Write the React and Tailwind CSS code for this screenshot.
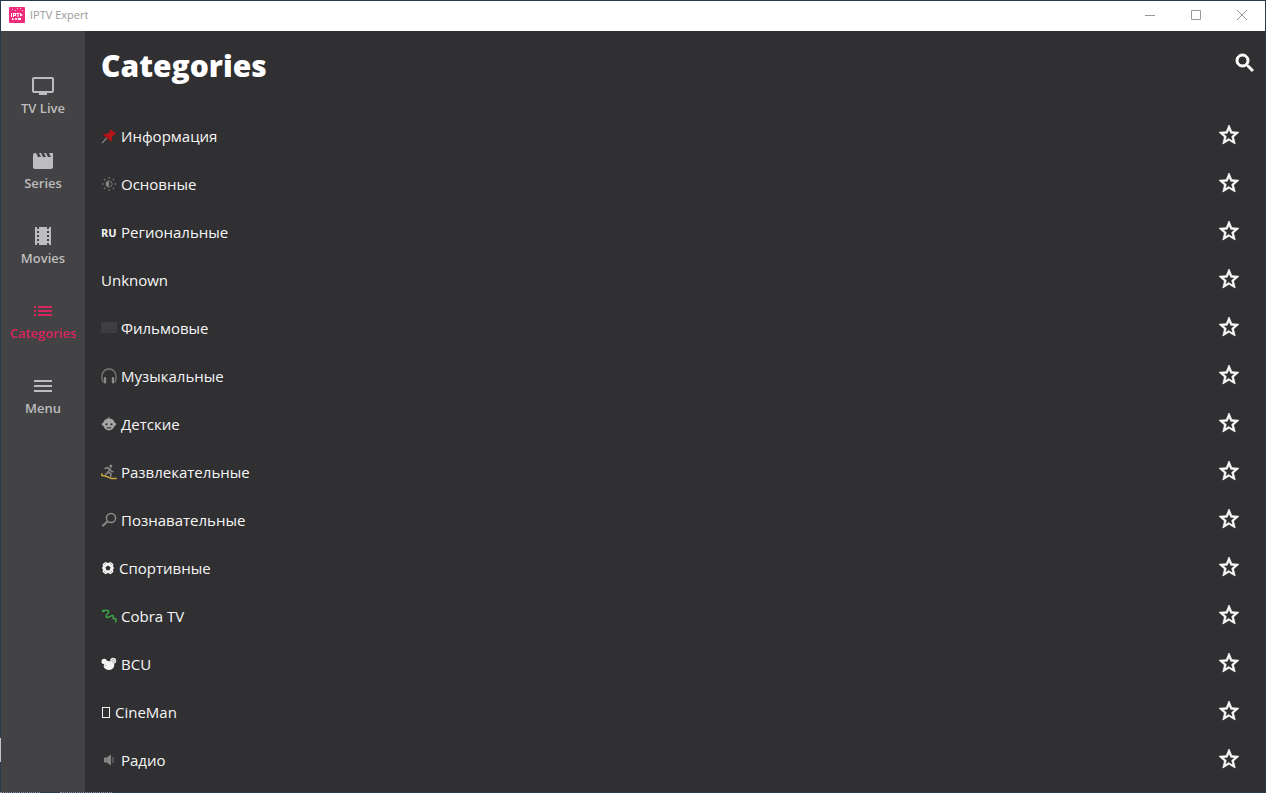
import React from "react";

function Glyph({ d, className = "" }) {
  return (
    <svg viewBox="0 0 24 24" className={`h-6 w-6 fill-current ${className}`} aria-hidden="true">
      <path d={d} />
    </svg>
  );
}

const paths = {
  tv: "M21 3H3c-1.1 0-2 .9-2 2v12c0 1.1.9 2 2 2h5v2h8v-2h5c1.1 0 1.99-.9 1.99-2L23 5c0-1.1-.9-2-2-2zm0 14H3V5h18v12z",
  series:
    "M18 4l2 4h-3l-2-4h-2l2 4h-3l-2-4H8l2 4H7L5 4H4c-1.1 0-1.99.9-1.99 2L2 18c0 1.1.9 2 2 2h16c1.1 0 2-.9 2-2V4h-4z",
  movies:
    "M18 3v2h-2V3H8v2H6V3H4v18h2v-2h2v2h8v-2h2v2h2V3h-2zM8 17H6v-2h2v2zm0-4H6v-2h2v2zm0-4H6V7h2v2zm10 8h-2v-2h2v2zm0-4h-2v-2h2v2zm0-4h-2V7h2v2z",
  list: "M3 13h2v-2H3v2zm0 4h2v-2H3v2zm0-8h2V7H3v2zm4 4h14v-2H7v2zm0 4h14v-2H7v2zM7 7v2h14V7H7z",
  menu: "M3 18h18v-2H3v2zm0-5h18v-2H3v2zm0-7v2h18V6H3z",
  search:
    "M15.5 14h-.79l-.28-.27C15.41 12.59 16 11.11 16 9.5 16 5.91 13.09 3 9.5 3S3 5.91 3 9.5 5.91 16 9.5 16c1.61 0 3.09-.59 4.23-1.57l.27.28v.79l5 4.99L20.49 19l-4.99-5zm-6 0C7.01 14 5 11.99 5 9.5S7.01 5 9.5 5 14 7.01 14 9.5 11.99 14 9.5 14z",
  star: "M12,15.39L8.24,17.66L9.23,13.38L5.91,10.5L10.29,10.13L12,6.09L13.71,10.13L18.09,10.5L14.77,13.38L15.76,17.66M22,9.24L14.81,8.63L12,2L9.19,8.63L2,9.24L7.45,13.97L5.82,21L12,17.27L18.18,21L16.54,13.97L22,9.24Z",
};

function Small({ children, className = "w-4" }) {
  return (
    <svg viewBox="0 0 16 16" className={`h-4 shrink-0 ${className}`} aria-hidden="true">
      {children}
    </svg>
  );
}

const Pin = () => (
  <Small>
    <path d="M5.6 10.2 1 15.2" stroke="#8b8b8b" strokeWidth="1.2" />
    <path d="M9.6 1.2 15.400 6.3l-1.4.6-.9-.3-2.4 3 .3 2.6-1.2 1.200L2 6.8l1-1 3.200.1 2.9-2.600-.4-1.1z" fill="#b8161b" />
    <path d="M9.3 3.4 12.7 6.6M3.4 6.3 10 12.6" stroke="#8c0d12" strokeWidth=".8" />
  </Small>
);

const Dim = () => (
  <Small>
    <circle cx="8" cy="8" r="3.1" fill="none" stroke="#777" strokeWidth="1" />
    <path d="M8 5a3 3 0 0 0 0 6z" fill="#858585" />
    <g stroke="#707070" strokeWidth="1.4">
      <path d="M8 1v1.700M8 13.3v1.700M1 8h1.700M13.3 8h1.700M3 3l1.200 1.200M11.8 11.8l1.200 1.200M3 13l1.200-1.200M11.8 4.2l1.200-1.200" />
    </g>
  </Small>
);

const Screen = () => (
  <Small>
    <rect x="0" y="2" width="16" height="11" rx="1" fill="#3f3e40" />
    <path d="M1 10.5h14" stroke="#393839" />
  </Small>
);

const Headphones = () => (
  <Small>
    <path d="M2.200 14.500C-1.200 7.500 2.500 1 8 1s9.200 6.500 5.800 13.500" fill="none" stroke="#777" strokeWidth="1.300" />
    <rect x="2.800" y="9" width="2.400" height="6.500" rx="1" fill="#8a8a8a" />
    <rect x="10.800" y="9" width="2.400" height="6.500" rx="1" fill="#8a8a8a" />
  </Small>
);

const Baby = () => (
  <Small>
    <path d="M8 3.4C7 2.600 7.300 1.300 8.500 1.200" fill="none" stroke="#a5a5a5" strokeWidth="1" />
    <path d="M8 2.500c3.300 0 5.300 1.800 5.700 4.300 2.100.1 2.100 2.700 0 3-.8 2.700-2.900 4.600-5.700 4.600s-4.900-1.900-5.700-4.600c-2.100-.3-2.100-2.900 0-3C2.700 4.300 4.700 2.500 8 2.500z" fill="#a5a5a5" />
    <circle cx="5.500" cy="8.300" r="1.100" fill="#303030" />
    <circle cx="10.500" cy="8.300" r="1.100" fill="#303030" />
    <path d="M6 11.500q2 1 4 0" fill="none" stroke="#303030" strokeWidth="1.200" />
  </Small>
);

const Snowboarder = () => (
  <Small>
    <path d="M.8 9.800.9 11.500c4 .4 6 1.300 8 2.300s4 .9 6.300.7" fill="none" stroke="#c9a93a" strokeWidth="1.500" strokeLinecap="round" />
    <circle cx="9.800" cy="2" r="1.500" fill="#8b8b8b" />
    <path d="M3.500 4.800 6 3.700l3 1.200-2.700 4L4 11.200M7 8.200l3 1.600-.5 3.200M8.800 4.800l1.400 2.400 2.400.6" fill="none" stroke="#858585" strokeWidth="1.600" />
  </Small>
);

const Lens = () => (
  <Small>
    <circle cx="10" cy="6" r="4.600" fill="none" stroke="#8c8c8c" strokeWidth="1.500" />
    <path d="m6.700 9.300-5.500 5" stroke="#858585" strokeWidth="2.100" />
  </Small>
);

const Ball = () => (
  <Small className="w-[14px]">
    <path d="M5 1 8 2.200 11 1l3.300 2.700-.7 2.300L15 8l-1.400 2 .7 2.300L11 15l-3-1.200L5 15l-3.300-2.700.7-2.300L1 8l1.400-2-.7-2.300z" fill="#f4f4f4" />
    <path d="m8 5 2.900 2.100-1.100 3.400H6.200L5.100 7.100z" fill="#303030" />
    <path d="m5.500 2.500-1.800 2M10.500 2.500l1.800 2M3.500 11.500l1.800 1.800M12.500 11.500l-1.800 1.800" stroke="#777" strokeWidth=".8" />
  </Small>
);

const Snake = () => (
  <Small>
    <path d="M1.500 3.200c1.500-.8 3.500-1.200 5.200-.7 2 .8 1 2.200-.4 3.500C4.500 7.900 5 9.600 7 9.400c2-.3 2.800-2.200 4.800-1.800 1.800.5-.6 2.200.4 3 .8.600 2-.6 2.700.3.500.8-.2 1.800-.1 3" fill="none" stroke="#3da447" strokeWidth="1.500" strokeLinecap="round" />
    <path d="M1 2.500 3 1.800l1.200 1L3 4.200l-1.800-.1z" fill="#3da447" />
  </Small>
);

const Mouse = () => (
  <Small>
    <circle cx="3.200" cy="5.400" r="2.700" fill="#f4f4f4" />
    <circle cx="12.200" cy="4.800" r="3" fill="#f4f4f4" />
    <circle cx="12.400" cy="4.700" r="1.500" fill="none" stroke="#888" strokeWidth=".7" />
    <path d="M3.500 6.500 6.500 4.700l3.400.8 3.200 2.200c.8 3.300-1.600 6.200-4.900 6.200-2.800 0-4.800-1.200-5.600-3.400z" fill="#f4f4f4" />
    <circle cx="4.500" cy="9.500" r=".6" fill="#888" />
  </Small>
);

const Tofu = () => (
  <svg viewBox="0 0 10 16" className="h-4 w-[10px] shrink-0" aria-hidden="true">
    <rect x="1.500" y="3.500" width="7" height="10" fill="none" stroke="#f4f4f4" />
  </svg>
);

const Speaker = () => (
  <Small>
    <path d="M3 5.500h2.800L10 2.500v11l-4.200-3H3z" fill="#858585" />
    <path d="M11.500 5q1.800 3 0 6" fill="none" stroke="#666" strokeWidth="1.200" />
  </Small>
);

const Ru = () => <span className="w-4 pt-0.5 text-[11px] font-bold">RU</span>;

const categories = [
  { icon: Pin, name: "Информация" },
  { icon: Dim, name: "Основные" },
  { icon: Ru, name: "Региональные" },
  { icon: null, name: "Unknown" },
  { icon: Screen, name: "Фильмовые" },
  { icon: Headphones, name: "Музыкальные" },
  { icon: Baby, name: "Детские" },
  { icon: Snowboarder, name: "Развлекательные" },
  { icon: Lens, name: "Познавательные" },
  { icon: Ball, name: "Спортивные" },
  { icon: Snake, name: "Cobra TV" },
  { icon: Mouse, name: "BCU" },
  { icon: Tofu, name: "CineMan" },
  { icon: Speaker, name: "Радио" },
];

const nav = [
  { label: "TV Live", d: paths.tv },
  { label: "Series", d: paths.series },
  { label: "Movies", d: paths.movies },
  { label: "Categories", d: paths.list, active: true },
  { label: "Menu", d: paths.menu },
];

function TitleBar() {
  return (
    <header className="flex h-[30px] shrink-0 items-center justify-between bg-white pb-0.5 pl-2 text-[#999]">
      <div className="flex items-center gap-[5px]">
        <svg viewBox="0 0 16 16" className="h-4 w-4" aria-hidden="true">
          <rect width="16" height="16" rx="1" fill="#f22a7c" />
          <g fill="#fff">
            <path d="M2 6h1v4H2zM4 6h3v3H5v1H4zM5 7v1h1V7zM7.500 6h3v1h-1v3h-1V7h-1zM11 6l3 2-3 1.500zM3 11h1v1h1v1H3zM5.500 11h1l.5 1 .5-1h1L7.500 13h-1zM9 11h3v2H9z" />
            <path d="M3 2h1v1H3zM8 1h1v1H8zM13 3h1v1h-1zM6 3h1v1H6zM11 1h1v1h-1z" opacity=".75" />
          </g>
        </svg>
        <span className="text-[11px] leading-4">IPTV Expert</span>
      </div>
      <div className="flex h-full">
        <button aria-label="Minimize" className="flex w-[46px] items-center justify-center">
          <svg viewBox="0 0 10 10" className="h-[10px] w-[10px]" stroke="currentColor"><path d="M0 5.500h10" /></svg>
        </button>
        <button aria-label="Maximize" className="flex w-[46px] items-center justify-center">
          <svg viewBox="0 0 10 10" className="h-[10px] w-[10px]" stroke="currentColor" fill="none"><path d="M.5.5h9v9h-9z" /></svg>
        </button>
        <button aria-label="Close" className="flex w-[46px] items-center justify-center">
          <svg viewBox="0 0 10 10" className="h-[10px] w-[10px]" stroke="currentColor"><path d="m0 0 10 10M10 0 0 10" /></svg>
        </button>
      </div>
    </header>
  );
}

export default function App() {
  return (
    <div className="relative flex min-h-screen flex-col border border-[#2c3a50] bg-[#302f31] font-['Open_Sans','Noto_Sans',sans-serif] text-[#f6f6f6]">
      <TitleBar />
      <div className="flex flex-1">
        <nav className="flex w-[84px] shrink-0 flex-col bg-[#434244] pt-[27px]">
          {nav.map((item) => (
            <a
              key={item.label}
              href="#"
              aria-current={item.active ? "page" : undefined}
              className={`flex h-[75px] flex-col items-center justify-center text-[13px] leading-5 font-semibold ${
                item.active ? "text-[#d8265f]" : "text-[#bdbcbe]"
              }`}
            >
              <Glyph d={item.d} />
              {item.label}
            </a>
          ))}
        </nav>
        <main className="min-w-0 flex-1 pl-4">
          <div className="flex h-[81px] items-start justify-between pt-3 pr-2">
            <h1 className="text-[30px] leading-[46px] font-extrabold text-white">Categories</h1>
            <button aria-label="Search" className="mt-2 text-white">
              <Glyph d={paths.search} className="stroke-current stroke-1" />
            </button>
          </div>
          <ul className="pr-6">
            {categories.map(({ icon: Icon, name }) => (
              <li key={name} className="flex h-12 items-center justify-between">
                <a href="#" className="flex items-center gap-1 text-[15px] leading-6">
                  {Icon && <Icon />}
                  {name}
                </a>
                <button aria-label={`Add ${name} to favourites`} className="pb-0.5 text-white">
                  <Glyph d={paths.star} className="stroke-current stroke-[0.7]" />
                </button>
              </li>
            ))}
          </ul>
        </main>
      </div>
      <div className="absolute top-[737px] -left-px h-6 w-px bg-[#c4c4c4]" />
      <div className="absolute -bottom-px -left-px flex gap-5">
        <span className="w-10 border-t border-dotted border-[#8d9096]" />
        <span className="w-[52px] border-t border-dotted border-[#8d9096]" />
      </div>
    </div>
  );
}
